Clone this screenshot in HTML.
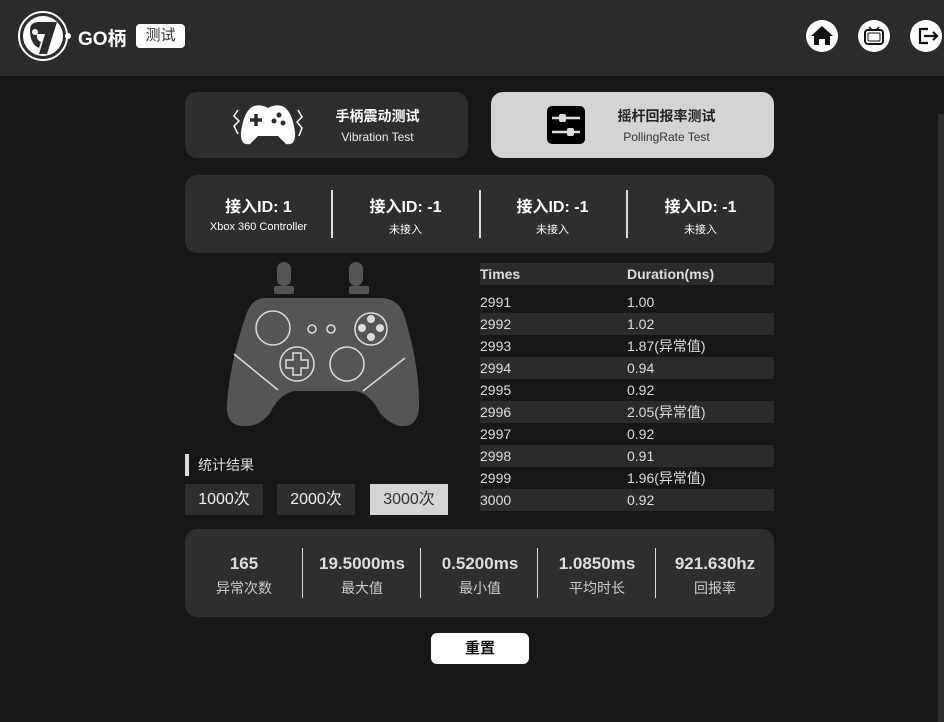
<!DOCTYPE html>
<html><head><meta charset="utf-8"><style>
*{margin:0;padding:0;box-sizing:border-box}
body{width:944px;height:722px;background:#171717;font-family:"Liberation Sans","Noto Sans CJK SC",sans-serif;color:#fff;position:relative;overflow:hidden}
.hdr{position:absolute;left:0;top:0;width:944px;height:76px;background:#2b2b2b}
.abs{position:absolute}
.card{position:absolute;background:#2e2e2e;border-radius:12px}
.c{text-align:center}
.sep{position:absolute;width:2px;background:#ddd}
.row{position:absolute;left:480px;width:294px;height:22px;font-size:14px;line-height:22px;color:#ddd}
.row span{position:absolute;left:0}
.row b{position:absolute;left:147px;font-weight:normal}
.alt{background:#2b2b2b}
.btn{position:absolute;top:484px;height:31px;width:78px;background:#2e2e2e;font-size:16px;line-height:31px;text-align:center;color:#eee}
</style></head><body>
<div class="hdr"></div>
<svg class="abs" style="left:17px;top:10px" width="60" height="54" viewBox="0 0 60 54">
<circle cx="26" cy="26" r="24" fill="none" stroke="#fff" stroke-width="2"/>
<circle cx="26" cy="26" r="20" fill="#fff"/>
<path d="M13 20 Q13 12 22 12 L40 12 L30 44 L22 44 L28 24 L20 24 Q19 30 24 32 L22 38 Q13 34 13 20Z" fill="#2b2b2b"/>
<circle cx="18" cy="22" r="3" fill="#fff"/>
<circle cx="51" cy="26" r="3" fill="#fff"/>
</svg>
<div class="abs" style="left:78px;top:24px;font-size:19px;font-weight:bold">GO柄</div>
<div class="abs" style="left:136px;top:24px;width:49px;height:24px;background:#fff;border-radius:4px;color:#333;font-size:15px;line-height:24px;text-align:center">测试</div>
<svg class="abs" style="left:806px;top:20px" width="32" height="32" viewBox="0 0 32 32"><circle cx="16" cy="16" r="16" fill="#fff"/><path d="M16 6 L27 16 L24 16 L24 25 L19 25 L19 19 L13 19 L13 25 L8 25 L8 16 L5 16Z" fill="#111"/></svg>
<svg class="abs" style="left:858px;top:20px" width="32" height="32" viewBox="0 0 32 32"><circle cx="16" cy="16" r="16" fill="#fff"/><rect x="7" y="10" width="18" height="14" rx="3" fill="none" stroke="#111" stroke-width="2"/><rect x="10" y="13" width="12" height="8" rx="1" fill="none" stroke="#111" stroke-width="1"/><path d="M11 7 L14 10 M21 7 L18 10" stroke="#111" stroke-width="1.5"/></svg>
<svg class="abs" style="left:910px;top:20px" width="34" height="32" viewBox="0 0 34 32"><circle cx="16" cy="16" r="16" fill="#fff"/><path d="M18 9 L10 9 L10 23 L18 23" fill="none" stroke="#111" stroke-width="2.2"/><path d="M14 16 L27 16 M23 12 L27 16 L23 20" fill="none" stroke="#111" stroke-width="2.2"/></svg>

<div class="card" style="left:185px;top:92px;width:283px;height:66px"></div>
<svg class="abs" style="left:230px;top:104px" width="76" height="42" viewBox="0 0 76 42"><path d="M24 2 Q31 0 38 4 Q45 0 52 2 Q62 6 65 28 Q66 42 56 40 L48 32 L28 32 L20 40 Q10 42 11 28 Q14 6 24 2Z" fill="#fff"/><path d="M20 16 h12 M26 10 v12" stroke="#2e2e2e" stroke-width="3.5"/><circle cx="49" cy="11" r="2.5" fill="#2e2e2e"/><circle cx="44" cy="17" r="2.5" fill="#2e2e2e"/><circle cx="53" cy="19" r="2.5" fill="#2e2e2e"/><path d="M8 6 L4 12 L9 17 L4 22 L8 30" stroke="#fff" fill="none" stroke-width="1.5"/><path d="M68 6 L72 13 L67 18 L72 24 L69 32" stroke="#fff" fill="none" stroke-width="1.5"/></svg>
<div class="abs c" style="left:320px;top:106px;width:115px;font-size:14px;font-weight:bold">手柄震动测试</div>
<div class="abs c" style="left:320px;top:130px;width:115px;font-size:12px;color:#eee">Vibration Test</div>

<div class="card" style="left:491px;top:92px;width:283px;height:66px;background:#d4d4d4"></div>
<svg class="abs" style="left:547px;top:106px" width="38" height="38" viewBox="0 0 38 38"><rect width="38" height="38" rx="5" fill="#000"/><path d="M5 12 h28 M5 26 h28" stroke="#ddd" stroke-width="2.5"/><rect x="12" y="8" width="7" height="8" rx="2" fill="#ddd"/><rect x="20" y="22" width="7" height="8" rx="2" fill="#ddd"/></svg>
<div class="abs c" style="left:604px;top:106px;width:125px;font-size:14px;font-weight:bold;color:#222">摇杆回报率测试</div>
<div class="abs c" style="left:604px;top:130px;width:125px;font-size:12px;color:#333">PollingRate Test</div>

<div class="card" style="left:185px;top:175px;width:589px;height:78px"></div>
<div class="abs c" style="left:185px;top:193px;width:147px;font-size:16px;font-weight:bold">接入ID: 1</div>
<div class="abs c" style="left:185px;top:221px;width:147px;font-size:11px">Xbox 360 Controller</div>
<div class="sep" style="left:331px;top:190px;height:48px"></div>
<div class="abs c" style="left:332px;top:193px;width:147px;font-size:16px;font-weight:bold">接入ID: -1</div>
<div class="abs c" style="left:332px;top:221px;width:147px;font-size:11px">未接入</div>
<div class="sep" style="left:479px;top:190px;height:48px"></div>
<div class="abs c" style="left:479px;top:193px;width:147px;font-size:16px;font-weight:bold">接入ID: -1</div>
<div class="abs c" style="left:479px;top:221px;width:147px;font-size:11px">未接入</div>
<div class="sep" style="left:626px;top:190px;height:48px"></div>
<div class="abs c" style="left:627px;top:193px;width:147px;font-size:16px;font-weight:bold">接入ID: -1</div>
<div class="abs c" style="left:627px;top:221px;width:147px;font-size:11px">未接入</div>

<svg class="abs" style="left:185px;top:258px" width="290" height="175" viewBox="0 0 290 175">
<g fill="#555"><rect x="92" y="4" width="14" height="24" rx="7"/><rect x="164" y="4" width="14" height="24" rx="7"/><rect x="89" y="28" width="20" height="8" rx="2"/><rect x="164" y="28" width="20" height="8" rx="2"/>
<path d="M80 40 L195 40 Q215 40 220 60 Q235 110 234 150 Q232 170 215 168 Q205 166 195 155 Q185 135 170 133 L110 133 Q95 135 85 155 Q75 168 62 168 Q40 170 42 145 Q45 105 60 60 Q66 40 80 40Z"/></g>
<g fill="none" stroke="#ddd" stroke-width="1.5"><circle cx="88" cy="70" r="17"/><circle cx="127" cy="71" r="4"/><circle cx="146" cy="71" r="4"/><circle cx="186" cy="71" r="16"/><circle cx="112" cy="106" r="17"/><circle cx="162" cy="106" r="17"/>
<path d="M108 95 h8 v7 h7 v8 h-7 v7 h-8 v-7 h-7 v-8 h7Z"/><path d="M49 96 L93 132 M220 100 L178 133"/></g>
<g fill="#ddd"><circle cx="186" cy="61" r="4"/><circle cx="177" cy="70" r="4"/><circle cx="195" cy="70" r="4"/><circle cx="186" cy="79" r="4"/></g>
</svg>
<div class="abs" style="left:185px;top:454px;width:4px;height:22px;background:#ddd"></div>
<div class="abs" style="left:198px;top:455px;font-size:14px;color:#ddd">统计结果</div>
<div class="btn" style="left:185px">1000次</div>
<div class="btn" style="left:277px">2000次</div>
<div class="btn" style="left:370px;background:#d4d4d4;color:#333">3000次</div>

<div class="row alt" style="top:263px;font-weight:bold"><span>Times</span><b style="font-weight:bold">Duration(ms)</b></div>
<div class="row" style="top:291px"><span>2991</span><b>1.00</b></div>
<div class="row alt" style="top:313px"><span>2992</span><b>1.02</b></div>
<div class="row" style="top:335px"><span>2993</span><b>1.87(异常值)</b></div>
<div class="row alt" style="top:357px"><span>2994</span><b>0.94</b></div>
<div class="row" style="top:379px"><span>2995</span><b>0.92</b></div>
<div class="row alt" style="top:401px"><span>2996</span><b>2.05(异常值)</b></div>
<div class="row" style="top:423px"><span>2997</span><b>0.92</b></div>
<div class="row alt" style="top:445px"><span>2998</span><b>0.91</b></div>
<div class="row" style="top:467px"><span>2999</span><b>1.96(异常值)</b></div>
<div class="row alt" style="top:489px"><span>3000</span><b>0.92</b></div>

<div class="card" style="left:185px;top:529px;width:589px;height:88px"></div>
<div class="abs c" style="left:185px;top:554px;width:118px;font-size:17px;font-weight:bold;color:#ddd">165</div>
<div class="abs c" style="left:185px;top:578px;width:118px;font-size:14px;color:#ccc">异常次数</div>
<div class="sep" style="left:302px;top:548px;height:50px;width:1px"></div>
<div class="abs c" style="left:303px;top:554px;width:118px;font-size:17px;font-weight:bold;color:#ddd">19.5000ms</div>
<div class="abs c" style="left:303px;top:578px;width:118px;font-size:14px;color:#ccc">最大值</div>
<div class="sep" style="left:420px;top:548px;height:50px;width:1px"></div>
<div class="abs c" style="left:421px;top:554px;width:118px;font-size:17px;font-weight:bold;color:#ddd">0.5200ms</div>
<div class="abs c" style="left:421px;top:578px;width:118px;font-size:14px;color:#ccc">最小值</div>
<div class="sep" style="left:537px;top:548px;height:50px;width:1px"></div>
<div class="abs c" style="left:538px;top:554px;width:118px;font-size:17px;font-weight:bold;color:#ddd">1.0850ms</div>
<div class="abs c" style="left:538px;top:578px;width:118px;font-size:14px;color:#ccc">平均时长</div>
<div class="sep" style="left:655px;top:548px;height:50px;width:1px"></div>
<div class="abs c" style="left:656px;top:554px;width:118px;font-size:17px;font-weight:bold;color:#ddd">921.630hz</div>
<div class="abs c" style="left:656px;top:578px;width:118px;font-size:14px;color:#ccc">回报率</div>

<div class="abs c" style="left:431px;top:633px;width:98px;height:31px;background:#fff;border-radius:6px;color:#111;font-size:15px;font-weight:bold;line-height:31px">重置</div>
<div class="abs" style="left:938px;top:114px;width:6px;height:608px;background:#2e2e2e"></div>
</body></html>
